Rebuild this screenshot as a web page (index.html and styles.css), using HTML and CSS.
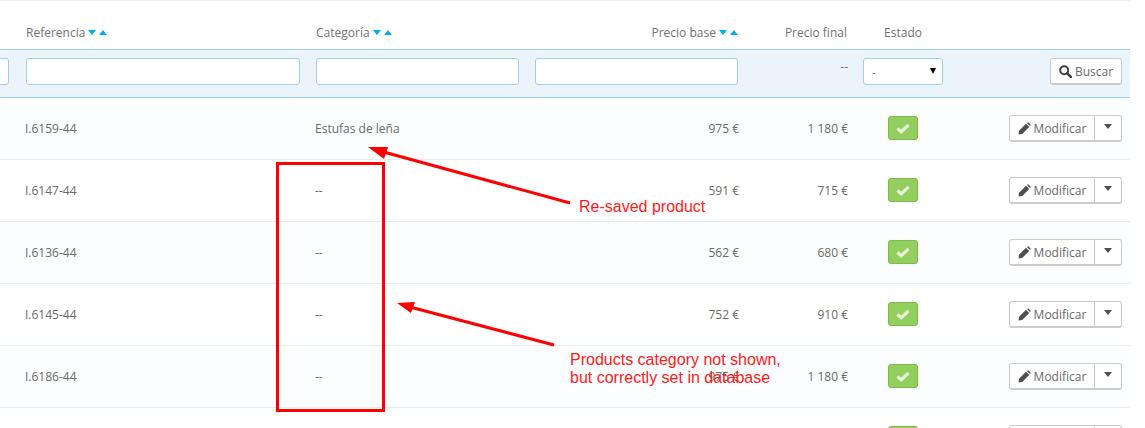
FILE: index.html
```html
<!DOCTYPE html>
<html lang="es">
<head>
    <meta charset="UTF-8">
    <meta name="viewport" content="width=device-width, initial-scale=1.0">
    <title>Productos</title>
    <link rel="stylesheet" href="styles.css">
</head>
<body>
    <svg class="icon-defs" width="0" height="0">
        <symbol id="icon-check" viewBox="0 0 14 11"><path d="M1.5 5.3L5.2 8.8L12.5 1.8" fill="none" stroke="#e8f4da" stroke-width="3.2"/></symbol>
        <symbol id="icon-pencil" viewBox="0 0 13 13"><path d="M0.5 12.5L1 8.8L8 1.8L11.2 5L4.2 12ZM8.9 0.9L9.8 0.4Q10.3 0.2 10.8 0.7L12.3 2.2Q12.8 2.7 12.6 3.2L12.1 4.1Z" fill="#505050"/></symbol>
    </svg>

    <div class="product-table">
        <div class="row head-row">
            <div></div>
            <div>Referencia <span class="sort"><i class="down"></i><i class="up"></i></span></div>
            <div>Categoría <span class="sort"><i class="down"></i><i class="up"></i></span></div>
            <div class="num price-base">Precio base <span class="sort"><i class="down"></i><i class="up"></i></span></div>
            <div class="num price-final">Precio final</div>
            <div class="state">Estado</div>
            <div></div>
        </div>

        <div class="row filter-row">
            <div><input class="filter-input cut-input" type="text"></div>
            <div><input class="filter-input input-ref" type="text"></div>
            <div><input class="filter-input input-cat" type="text"></div>
            <div><input class="filter-input input-price" type="text"></div>
            <div class="num no-filter">--</div>
            <div class="state">
                <div class="select-box">-</div>
            </div>
            <div class="actions">
                <button class="btn search-btn" type="button">
                    <svg width="13" height="13" viewBox="0 0 13 13"><circle cx="5.2" cy="5.2" r="4" fill="none" stroke="#3f3f3f" stroke-width="2"/><path d="M8.3 8.3L11.8 11.8" stroke="#3f3f3f" stroke-width="2.6" stroke-linecap="round"/></svg>
                    Buscar
                </button>
            </div>
        </div>

        <div class="row item-row odd">
            <div></div>
            <div class="ref">I.6159-44</div>
            <div class="cat">Estufas de leña</div>
            <div class="num">975 €</div>
            <div class="num">1 180 €</div>
            <div class="state"><span class="status"><svg width="14" height="11"><use href="#icon-check"/></svg></span></div>
            <div class="actions"><div class="btn-group"><button class="btn edit-btn" type="button"><svg width="13" height="13"><use href="#icon-pencil"/></svg>Modificar</button><button class="btn caret-btn" type="button"><i class="caret"></i></button></div></div>
        </div>

        <div class="row item-row">
            <div></div>
            <div class="ref">I.6147-44</div>
            <div class="cat">--</div>
            <div class="num">591 €</div>
            <div class="num">715 €</div>
            <div class="state"><span class="status"><svg width="14" height="11"><use href="#icon-check"/></svg></span></div>
            <div class="actions"><div class="btn-group"><button class="btn edit-btn" type="button"><svg width="13" height="13"><use href="#icon-pencil"/></svg>Modificar</button><button class="btn caret-btn" type="button"><i class="caret"></i></button></div></div>
        </div>

        <div class="row item-row odd">
            <div></div>
            <div class="ref">I.6136-44</div>
            <div class="cat">--</div>
            <div class="num">562 €</div>
            <div class="num">680 €</div>
            <div class="state"><span class="status"><svg width="14" height="11"><use href="#icon-check"/></svg></span></div>
            <div class="actions"><div class="btn-group"><button class="btn edit-btn" type="button"><svg width="13" height="13"><use href="#icon-pencil"/></svg>Modificar</button><button class="btn caret-btn" type="button"><i class="caret"></i></button></div></div>
        </div>

        <div class="row item-row">
            <div></div>
            <div class="ref">I.6145-44</div>
            <div class="cat">--</div>
            <div class="num">752 €</div>
            <div class="num">910 €</div>
            <div class="state"><span class="status"><svg width="14" height="11"><use href="#icon-check"/></svg></span></div>
            <div class="actions"><div class="btn-group"><button class="btn edit-btn" type="button"><svg width="13" height="13"><use href="#icon-pencil"/></svg>Modificar</button><button class="btn caret-btn" type="button"><i class="caret"></i></button></div></div>
        </div>

        <div class="row item-row odd">
            <div></div>
            <div class="ref">I.6186-44</div>
            <div class="cat">--</div>
            <div class="num">975 €</div>
            <div class="num">1 180 €</div>
            <div class="state"><span class="status"><svg width="14" height="11"><use href="#icon-check"/></svg></span></div>
            <div class="actions"><div class="btn-group"><button class="btn edit-btn" type="button"><svg width="13" height="13"><use href="#icon-pencil"/></svg>Modificar</button><button class="btn caret-btn" type="button"><i class="caret"></i></button></div></div>
        </div>

        <div class="row item-row">
            <div></div>
            <div></div>
            <div></div>
            <div></div>
            <div></div>
            <div class="state"><span class="status"></span></div>
            <div class="actions"><div class="btn-group"><button class="btn edit-btn" type="button"></button><button class="btn caret-btn" type="button"></button></div></div>
        </div>
    </div>

    <!-- Anotaciones encima de la captura -->
    <svg class="marks" width="1145" height="428" viewBox="0 0 1145 428">
        <rect x="277.5" y="163.5" width="106" height="247" fill="none" stroke="#fe0000" stroke-width="3"/>
        <path d="M570 203L380 151" stroke="#fe0000" stroke-width="3"/>
        <polygon points="368,147 388,147 384,159" fill="#fe0000"/>
        <path d="M554 345L410 307" stroke="#fe0000" stroke-width="3"/>
        <polygon points="397,303 415,302 411,313" fill="#fe0000"/>
    </svg>
    <div class="note note-saved">Re-saved product</div>
    <div class="note note-category">Products category not shown,<br>but correctly set in database</div>
</body>
</html>
```

FILE: styles.css
```css
html, body { height: 428px; overflow: hidden; }

body {
    margin: 0;
    background: #fff;
    color: #6a6a6a;
    font-family: "Open Sans", sans-serif;
    font-size: 12px;
    position: relative;
}

.icon-defs { position: absolute; }

.product-table {
    box-sizing: border-box;
    width: 1130px;
    height: 428px;
    overflow: hidden;
    border-top: 1px solid #eee;
}

/* Columnas compartidas */
.row {
    display: grid;
    grid-template-columns: 26px 290px 219px 204px 109px 115px 167px;
    align-items: center;
}

.head-row {
    box-sizing: border-box;
    height: 48px;
    padding-top: 14px;
    color: #727272;
}

.filter-row {
    box-sizing: border-box;
    height: 49px;
    padding-bottom: 4px;
    background: #ecf4fb;
    border-top: 1px solid #a0d0eb;
    border-bottom: 1px solid #a0d0eb;
}

.item-row {
    height: 61px;
    background: #fff;
    border-bottom: 1px solid #eaedef;
}

.item-row.odd { background: #fcfdfe; }

.num { text-align: right; }
.state { padding-left: 15px; width: 80px; text-align: center; }
.actions { display: flex; justify-content: flex-end; padding-right: 8px; }

.ref { margin-left: -1px; }
.cat { margin-left: -1px; }

.price-base { padding-right: 1px; }
.price-final { padding-right: 1px; }
.no-filter { margin-top: -11px; }

/* Flechas de orden */
.sort { display: inline-flex; gap: 3px; vertical-align: 2px; }

.sort i {
    width: 0;
    height: 0;
    border-left: 4.5px solid transparent;
    border-right: 4.5px solid transparent;
}

.sort .down { border-top: 5px solid #00aff0; }
.sort .up { border-bottom: 5px solid #00aff0; }

/* Filtros */
.filter-input {
    display: block;
    box-sizing: border-box;
    height: 27px;
    padding: 0 6px;
    background: #fff;
    border: 1px solid #a0d0eb;
    border-radius: 3px;
}

.cut-input { width: 40px; margin-left: -31px; }
.input-ref { width: 274px; }
.input-cat { width: 203px; }
.input-price { width: 203px; }

.select-box {
    box-sizing: border-box;
    height: 27px;
    padding: 5px 8px 0;
    position: relative;
    background: #fff;
    border: 1px solid #a0d0eb;
    border-radius: 3px;
    text-align: left;
    font-size: 11px;
}

.select-box::after {
    content: "";
    position: absolute;
    top: 9px;
    right: 6px;
    border-left: 3px solid transparent;
    border-right: 3px solid transparent;
    border-top: 6px solid #000;
}

/* Botones */
.btn {
    box-sizing: border-box;
    height: 27px;
    margin: 0;
    padding: 0;
    display: inline-flex;
    align-items: center;
    justify-content: center;
    gap: 3px;
    background: #fff;
    border: 1px solid #ccc;
    border-bottom-width: 2px;
    border-radius: 3px;
    color: #6a6a6a;
    font-family: inherit;
    font-size: 12px;
}

.search-btn { width: 72px; }

.btn-group { display: flex; }

.edit-btn {
    width: 86px;
    border-radius: 3px 0 0 3px;
}

.caret-btn {
    width: 28px;
    margin-left: -1px;
    border-radius: 0 3px 3px 0;
}

.caret {
    width: 0;
    height: 0;
    border-left: 4.5px solid transparent;
    border-right: 4.5px solid transparent;
    border-top: 5px solid #505050;
    margin-top: -3px;
}

.status {
    display: flex;
    align-items: center;
    justify-content: center;
    box-sizing: border-box;
    width: 30px;
    height: 24px;
    margin: -1px auto 0;
    background: #93cf5e;
    border: 1px solid #7fb94b;
    border-radius: 3px;
}

/* Anotaciones */
.marks {
    position: absolute;
    top: 0;
    left: 0;
}

.note {
    position: absolute;
    color: #fe1a1a;
    font-family: "Liberation Sans", Arial, sans-serif;
    font-size: 16px;
    line-height: 18px;
}

.note-saved { top: 198px; left: 579px; }
.note-category { top: 351px; left: 570px; }
```
